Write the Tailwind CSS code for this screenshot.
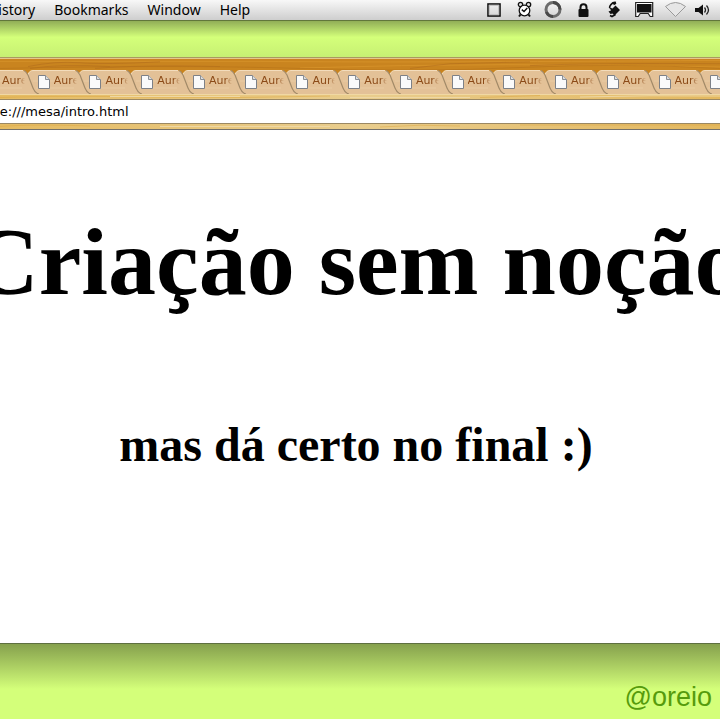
<!DOCTYPE html>
<html lang="pt-BR">
<head>
<meta charset="utf-8">
<meta name="viewport" content="width=device-width, initial-scale=1">
<title>Criação sem noção</title>
<script src="https://cdn.jsdelivr.net/npm/@tailwindcss/browser@4"></script>
</head>
<body class="flex h-screen flex-col overflow-hidden bg-[#d4ff7a]">

<header class="flex h-[21px] shrink-0 items-center justify-between border-b border-[#61763b] bg-linear-to-b from-[#f8f8f8] to-[#cecece] pr-[9px] font-['Noto_Sans',sans-serif] text-sm text-black">
  <nav class="-ml-3 flex gap-[19px] leading-5" aria-label="Menu">
    <a href="#">History</a>
    <a href="#">Bookmarks</a>
    <a href="#">Window</a>
    <a href="#">Help</a>
  </nav>
  <div class="flex items-center">
    <svg class="mr-[16px] h-5 w-[15px]" viewBox="0 0 15 20"><rect x="2" y="4" width="12" height="12" fill="none" stroke="#111" stroke-width="1.600"/><rect x="3.300" y="5.300" width="9.400" height="9.400" fill="none" stroke="#bbb"/></svg>
    <svg class="mr-[12px] h-5 w-[15px]" viewBox="0 0 15 20"><g fill="none" stroke="#111" stroke-width="1.300"><circle cx="3.500" cy="4.500" r="2.200" fill="#ddd"/><circle cx="11.500" cy="4.500" r="2.200" fill="#ddd"/><circle cx="7.500" cy="10.500" r="5.300" fill="#fff"/><path d="M3.500 14.500 2 16.500M11.500 14.500l1.500 2" stroke-width="2"/><path d="m4.800 9.700 2.200 1.800 3.300-3.500" stroke-width="1.500"/></g></svg>
    <svg class="mr-[16px] h-5 w-[18px]" viewBox="0 0 18 20"><circle cx="9" cy="9.500" r="7" fill="none" stroke="#6c6c6c" stroke-width="3"/><path d="M9 2.500a7 7 0 0 1 7 7M9 16.500a7 7 0 0 1-6.500-4.500" fill="none" stroke="#484848" stroke-width="3"/></svg>
    <svg class="mr-[19px] h-5 w-[11px]" viewBox="0 0 11 20"><path d="M2.500 9.500V7.200a3 3 0 0 1 6 0v2.300" fill="none" stroke="#111" stroke-width="2"/><rect x=".5" y="9" width="10" height="8" rx="1" fill="#111"/></svg>
    <svg class="mr-[15px] h-5 w-[12px]" viewBox="0 0 12 20"><path d="M7.500 5.500 12 10 6.500 15.500 4.500 13.500 2.500 14 .5 11.500 3 10.500 1.500 7.500 4.500 8.500Z" fill="#111"/><path d="M8 2.500Q5 2 3 4.500T2 8M5.500 4.500 8 3M2 15.500l2 1 3.500-2" fill="none" stroke="#111" stroke-width="1.700"/></svg>
    <svg class="mr-[10px] h-5 w-[19px]" viewBox="0 0 19 20"><path d="M.7 2.500h17v14h-2.500l-2-3h-8l-2 3H.7Z" fill="#fff" stroke="#222" stroke-width="1.200"/><rect x="2" y="4" width="14.500" height="8.500" fill="#111"/></svg>
    <svg class="mr-[8px] h-5 w-[23px]" viewBox="0 0 23 20"><path d="M1.500 6.500Q11.500-1.500 21.500 6.500L11.500 16.500Z" fill="#e6e6e6" stroke="#999"/></svg>
    <svg class="h-5 w-[16px]" viewBox="0 0 16 20"><path d="M0 8h3.500L8 4.500v11L3.500 12H0Z" fill="#111"/><path d="M9.500 7.500q2 2.500 0 5M11.500 5.500q4 4.500 0 9" fill="none" stroke="#222" stroke-width="1.300"/></svg>
  </div>
</header>

<div class="h-9 shrink-0 bg-linear-to-b from-[#91ae57] via-[#d4ff7a] via-45% to-[#c7f073]"></div>

<main class="flex flex-1 flex-col overflow-hidden border-y border-t-[#a99a60] border-b-[#5e7040] bg-white">
  <div class="relative flex h-9 shrink-0 items-end border-b border-[#917c59] border-t border-t-[#e6c68c] bg-[#c9841f] font-['DejaVu_Sans',sans-serif] text-[11px] text-[#8b4a17]">
    <svg class="absolute inset-0 h-full w-full" viewBox="0 0 720 36" preserveAspectRatio="none" fill="none" stroke-width="1">
      <path d="M0 2.500H260Q400 4 720 1.500M300 9.500Q500 3 720 8.500" stroke="#d59128"/>
      <path d="M28 8Q55 2 80 4T160 3M30 10Q60 5 110 8M95 10Q140 6 220 8M410 10 450 5 530 3M530 7Q590 4 720 5" stroke="#a9661b" opacity=".45"/>
      <path d="M0 10Q180 6 300 10T520 9T720 10" stroke="#b57118" opacity=".6"/>
    </svg>
    <div id="tabs" class="relative -mr-8 -ml-6 flex flex-1" role="tablist" aria-label="Abas"></div>
  </div>

  <div class="relative h-9 shrink-0 overflow-hidden border-b border-[#75716a] bg-linear-to-r from-[#e5bb62] via-[#e9cd8d] to-[#e3b85f] py-[5px]">
    <svg class="absolute inset-0 h-full w-full" viewBox="0 0 720 35" preserveAspectRatio="none" fill="none">
      <path d="M0 .5H720" stroke="#f0d8a4"/>
      <path d="M0 3.500Q60 1.500 150 3T330 2M480 3.500 540 1.500M0 32.500Q30 30 90 32M380 33Q420 30 460 32M520 31H720" stroke="#dba53e" opacity=".5"/>
      <path d="M110 2.500H240M350 3.500H470M160 32.500H330M580 3Q650 1 720 2" stroke="#eed7a4"/>
    </svg>
    <input type="text" value="file:///mesa/intro.html" aria-label="Endereço" class="relative -ml-6 block h-[25px] w-[calc(100%+48px)] border-y border-[#9b8863] bg-white pl-3 font-['DejaVu_Sans',sans-serif] text-[13px] leading-6 text-black outline-none">
  </div>

  <article class="flex flex-1 flex-col items-center pt-[84px] pr-2 font-['Liberation_Serif',serif] font-bold whitespace-nowrap text-black">
    <h1 class="text-[96px] leading-[96px]">Criação sem noção</h1>
    <h2 class="mt-[111px] text-[48px] leading-[48px]">mas dá certo no final :)</h2>
  </article>
</main>

<footer class="flex h-[75px] shrink-0 items-end justify-end bg-linear-to-b from-[#86a14d] to-[#d4ff7a] to-60% pr-2 pb-2">
  <a href="#" class="font-['Liberation_Sans',sans-serif] text-[27px] leading-7 text-[#569b0c]">@oreio</a>
</footer>

<template id="tab">
  <button type="button" role="tab" class="relative flex h-[23px] min-w-0 flex-1 items-center pl-[10px]">
    <svg class="absolute top-0 left-0 h-6 w-[63px]" viewBox="0 0 63 24"><path d="M0 24V5Q1 .5 5 .5H47Q50 .5 52 5L57 18Q59 23 63 24Z" fill="#e3c197"/><path d="M0 5Q1 .5 5 .5H47" fill="none" stroke="#f3dcbc"/><path d="M5 11H43M8 18H46" stroke="#ebcfa9" opacity=".7"/><path d="M48 .5Q50 1.500 52 5L57 18Q59 23 63 24" fill="none" stroke="#a28a68" stroke-width="1.200"/></svg>
    <svg class="relative h-[14px] w-[12px] shrink-0" viewBox="0 0 12 14"><path d="M.5.5h7l4 4v9H.5Z" fill="#fafafa" stroke="#7d8187"/><path d="M7.500.5v4h4" fill="#ddd" stroke="#8b8f94"/></svg>
    <span class="relative ml-1 w-[23px] shrink-0 overflow-hidden text-left [mask-image:linear-gradient(to_right,black_70%,transparent)]">Aure</span>
  </button>
</template>
<script>
  const tabs = document.getElementById('tabs');
  const tab = document.getElementById('tab');
  const count = 15;
  for (let i = 0; i < count; i++) {
    const node = tab.content.cloneNode(true);
    // Each tab's slanted edge covers the start of the one after it.
    node.firstElementChild.style.zIndex = count - i;
    tabs.append(node);
  }
</script>
</body>
</html>
